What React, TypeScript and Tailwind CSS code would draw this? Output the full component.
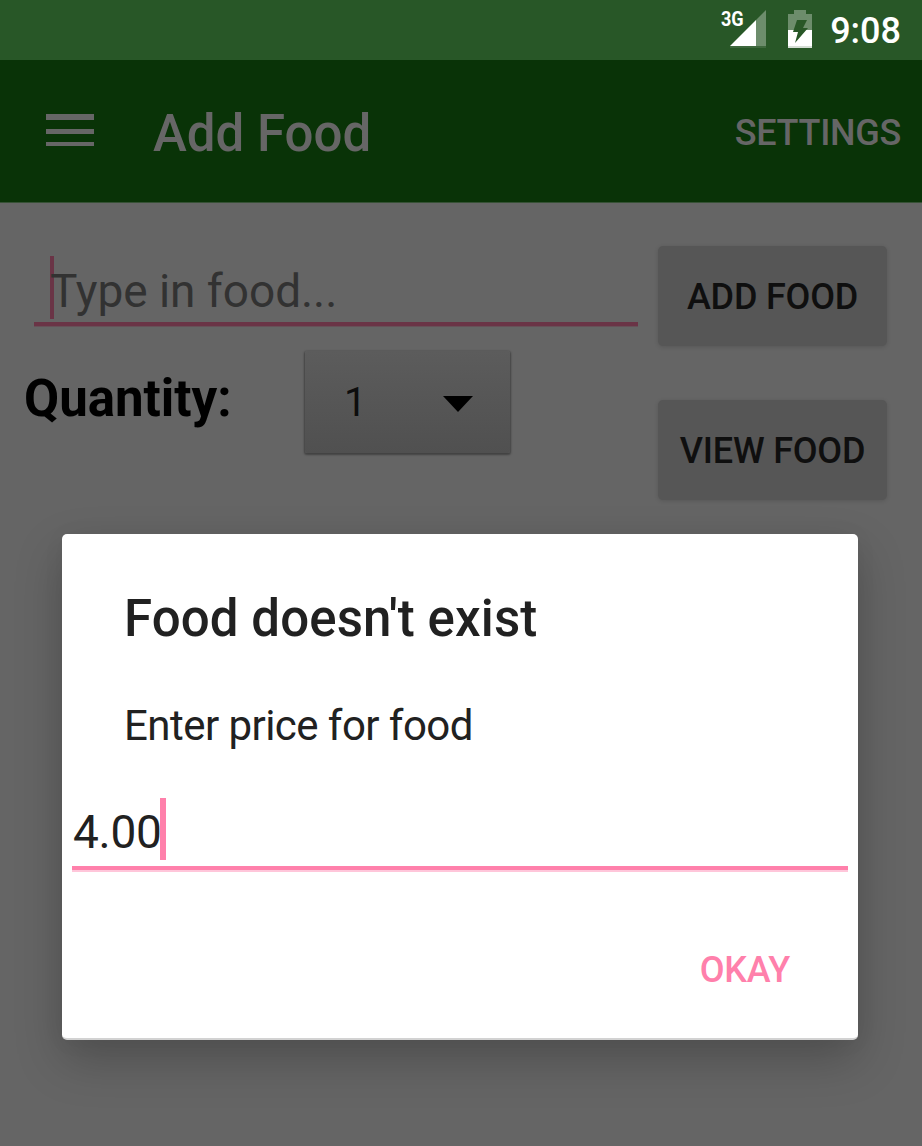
import React from "react";

function StatusBar() {
  return (
    <div className="flex h-[60px] items-start justify-end bg-[#285727] pr-[21px] text-white">
      <div className="relative mt-[10px] h-[38px] w-[46px]">
        <svg className="absolute left-[10px] top-0 h-[38px] w-[36px]" viewBox="0 0 36 38">
          <path d="M26 10 36 0V36H26Z" fill="#6d8d6c" />
          <path d="M0 36 26 10V36Z" fill="#fff" />
          <path d="M0 36H36V38H0Z" fill="#3e683d" />
        </svg>
        <span className="absolute left-[1px] top-[-2px] origin-left scale-x-[0.86] text-[21px] font-bold leading-[22px]">3G</span>
      </div>
      <svg className="ml-[22px] mt-[10px] h-[38px] w-[24px]" viewBox="0 0 24 38">
        <path d="M6 0H18V4H24V20H0V4H6Z" fill="#6d8d6c" />
        <path d="M0 20H24V38H0Z" fill="#fff" />
        <path d="M0 36H24V38H0Z" fill="#d5ded5" />
        <path d="M9 10H19L15 18H20L7 33L10 22H5Z" fill="#285727" />
      </svg>
      <span className="ml-[18px] pt-px text-[36px] font-medium leading-[60px]">9:08</span>
    </div>
  );
}

function AppBar() {
  return (
    <header className="flex h-[143px] items-center border-b border-[#365135] bg-[#093307] pl-[46px] pr-[21px] text-[#666]">
      <div className="mb-[2px] flex h-[32px] w-[48px] flex-col justify-between">
        <div className="h-[6px] bg-current" />
        <div className="h-[5px] bg-current" />
        <div className="h-[4px] bg-current" />
      </div>
      <h1 className="ml-[59px] flex-1 whitespace-nowrap pt-[5px] text-[51px] font-medium leading-[60px]">Add Food</h1>
      <button className="pt-[4px] text-[36px] font-medium leading-[40px] tracking-[-0.3px]">SETTINGS</button>
    </header>
  );
}

function FoodButton({ label }: { label: string }) {
  return (
    <button className="flex h-[100px] w-[229px] items-center justify-center whitespace-nowrap rounded-[5px] bg-[#565656] pt-[2px] text-[36px] font-medium tracking-[-0.2px] text-[#0f0f0f] shadow-[0_1px_4px_rgba(0,0,0,0.14)]">
      {label}
    </button>
  );
}

function FoodForm() {
  return (
    <main className="flex">
      <div className="w-[658px] pl-[24px] pt-[43px]">
        <div className="relative ml-[10px] flex h-[80px] w-[604px] items-center border-b-4 border-[#6a3446] pl-[16px] shadow-[0_1px_0_#675058]">
          <span className="absolute left-[16px] top-[10px] h-[63px] w-[4px] bg-[#6a3446]" />
          <span className="relative pt-[13px] text-[46px] leading-[54px] tracking-[-0.05px] text-[#323232]">Type in food...</span>
        </div>
        <div className="flex pt-[25px]">
          <span className="w-[281px] pt-[20px] text-[51px] font-bold leading-[56px] text-black">Quantity:</span>
          <button className="flex h-[102px] w-[205px] items-center rounded-[2px] bg-linear-to-b from-[#5c5c5c] to-[#505050] pl-[39px] pr-[37px] text-[40px] text-[#0d0d0d] shadow-[0_1px_2px_1px_rgba(0,0,0,0.35)]">
            <span className="pt-px">1</span>
            <svg className="ml-auto mt-[3px] h-[16px] w-[30px]" viewBox="0 0 30 16">
              <path d="M0 0H30L15 16Z" fill="#000" />
            </svg>
          </button>
        </div>
      </div>
      <div className="flex flex-col gap-[54px] pt-[43px]">
        <FoodButton label="ADD FOOD" />
        <FoodButton label="VIEW FOOD" />
      </div>
    </main>
  );
}

function PriceDialog() {
  return (
    <section role="dialog" className="absolute left-[62px] top-[534px] flex h-[506px] w-[796px] flex-col rounded-[5px] border-b-2 border-[#d2d2d2] bg-white text-[#212121] shadow-[0_20px_48px_rgba(0,0,0,0.22),0_2px_24px_rgba(0,0,0,0.04)]">
      <h2 className="ml-[62px] mt-[55px] whitespace-nowrap text-[51px] font-medium leading-[60px] tracking-[0.1px]">Food doesn't exist</h2>
      <p className="ml-[62px] mt-[52px] whitespace-nowrap text-[42px] leading-[50px] tracking-[-0.55px]">Enter price for food</p>
      <div className="mx-[10px] mt-[41px] flex h-[78px] border-b-4 border-[#ff80ab] pl-[1px] shadow-[0_2px_0_#ffc6da]">
        <span className="w-[87px] whitespace-nowrap pt-[15px] text-[46px] leading-[50px] tracking-[-0.3px]">4.00</span>
        <span className="mt-[6px] h-[62px] w-[6px] bg-[#ff80ab]" />
      </div>
      <button className="ml-auto mr-[68px] mt-[80px] text-[36px] font-medium leading-[40px] tracking-[-0.3px] text-[#ff80ab]">OKAY</button>
    </section>
  );
}

export default function App() {
  return (
    <div className="relative h-[1146px] w-[922px] overflow-hidden bg-[#656565] font-['Roboto',sans-serif]">
      <StatusBar />
      <AppBar />
      <FoodForm />
      <PriceDialog />
    </div>
  );
}
